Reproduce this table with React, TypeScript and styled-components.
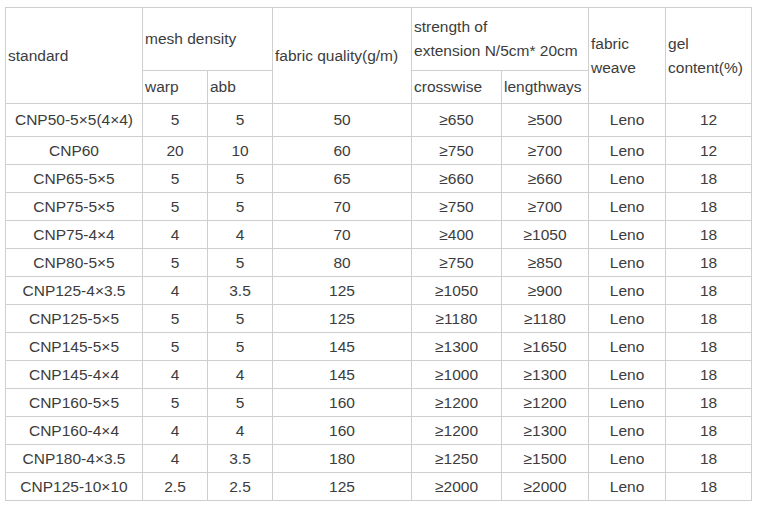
import React from "react";
import styled, { createGlobalStyle } from "styled-components";

const GlobalStyle = createGlobalStyle`
  html, body { margin: 0; padding: 0; background: #ffffff; }
  body { font-family: "Liberation Sans", Arial, sans-serif; }
`;

const Page = styled.div`
  padding: 7px 0 0 5px;
`;

const Table = styled.table`
  border-collapse: collapse;
  table-layout: fixed;
  width: 747px;
  font-family: "Liberation Sans", Arial, sans-serif;
  font-size: 15.5px;
  color: #3c3c3c;
`;

const HeadCell = styled.td`
  border: 1px solid #cfcfcf;
  padding: 0 2px;
  text-align: left;
  vertical-align: middle;
  line-height: 24px;
`;

const Cell = styled.td`
  border: 1px solid #cfcfcf;
  padding: 0 2px;
  text-align: center;
  vertical-align: middle;
  line-height: 18px;
  white-space: nowrap;
`;

const Row = styled.tr<{ $h: number }>`
  height: ${(p) => p.$h}px;
`;

const widths = [137, 65, 65, 139, 90, 87, 77, 86];

const rows: string[][] = [
  ["CNP50-5×5(4×4)", "5", "5", "50", "≥650", "≥500", "Leno", "12"],
  ["CNP60", "20", "10", "60", "≥750", "≥700", "Leno", "12"],
  ["CNP65-5×5", "5", "5", "65", "≥660", "≥660", "Leno", "18"],
  ["CNP75-5×5", "5", "5", "70", "≥750", "≥700", "Leno", "18"],
  ["CNP75-4×4", "4", "4", "70", "≥400", "≥1050", "Leno", "18"],
  ["CNP80-5×5", "5", "5", "80", "≥750", "≥850", "Leno", "18"],
  ["CNP125-4×3.5", "4", "3.5", "125", "≥1050", "≥900", "Leno", "18"],
  ["CNP125-5×5", "5", "5", "125", "≥1180", "≥1180", "Leno", "18"],
  ["CNP145-5×5", "5", "5", "145", "≥1300", "≥1650", "Leno", "18"],
  ["CNP145-4×4", "4", "4", "145", "≥1000", "≥1300", "Leno", "18"],
  ["CNP160-5×5", "5", "5", "160", "≥1200", "≥1200", "Leno", "18"],
  ["CNP160-4×4", "4", "4", "160", "≥1200", "≥1300", "Leno", "18"],
  ["CNP180-4×3.5", "4", "3.5", "180", "≥1250", "≥1500", "Leno", "18"],
  ["CNP125-10×10", "2.5", "2.5", "125", "≥2000", "≥2000", "Leno", "18"],
];

export default function App() {
  return (
    <>
      <GlobalStyle />
      <Page>
        <Table>
          <colgroup>
            {widths.map((w, i) => (
              <col key={i} style={{ width: w }} />
            ))}
          </colgroup>
          <tbody>
            <Row $h={63}>
              <HeadCell rowSpan={2}>standard</HeadCell>
              <HeadCell colSpan={2}>mesh density</HeadCell>
              <HeadCell rowSpan={2}>fabric quality(g/m)</HeadCell>
              <HeadCell colSpan={2}>
                strength of
                <br />
                extension N/5cm* 20cm
              </HeadCell>
              <HeadCell rowSpan={2}>fabric weave</HeadCell>
              <HeadCell rowSpan={2}>gel content(%)</HeadCell>
            </Row>
            <Row $h={33}>
              <HeadCell>warp</HeadCell>
              <HeadCell>abb</HeadCell>
              <HeadCell>crosswise</HeadCell>
              <HeadCell>lengthways</HeadCell>
            </Row>
            {rows.map((r, i) => (
              <Row key={i} $h={i === 0 ? 33 : 28}>
                {r.map((c, j) => (
                  <Cell key={j}>{c}</Cell>
                ))}
              </Row>
            ))}
          </tbody>
        </Table>
      </Page>
    </>
  );
}
